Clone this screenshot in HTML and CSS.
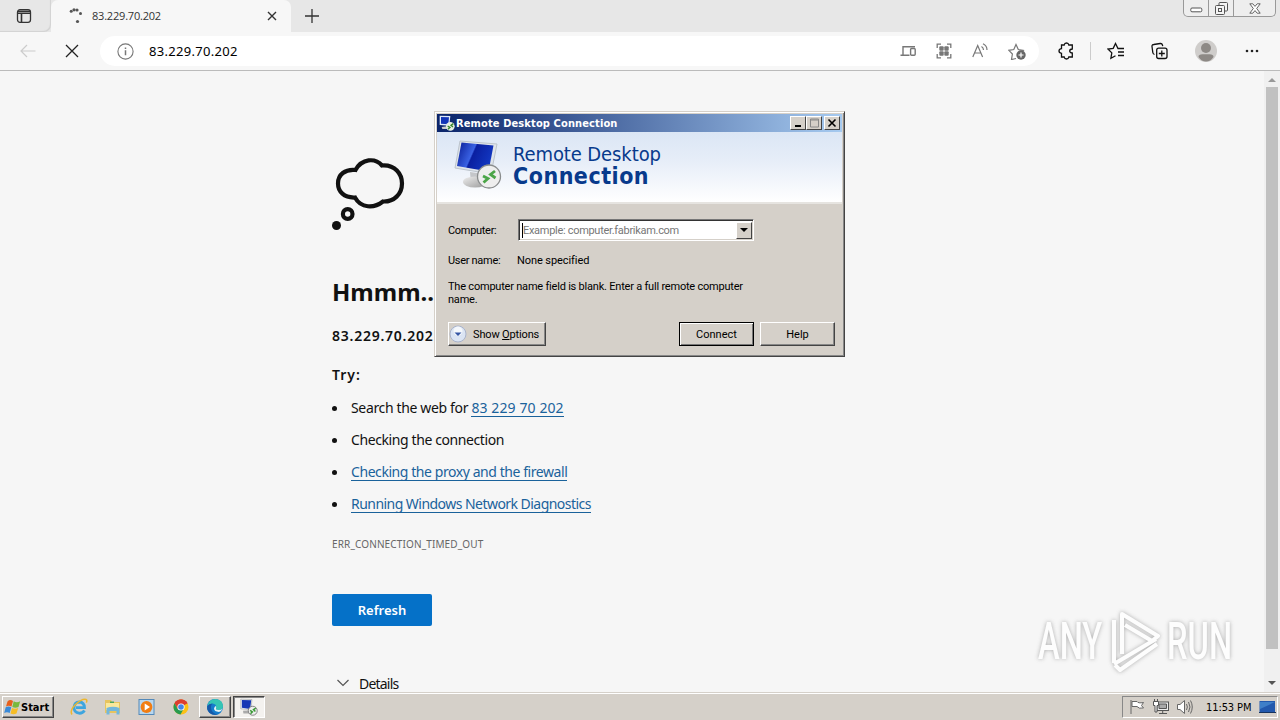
FILE: index.html
```html
<!DOCTYPE html>
<html lang="en">
<head>
    <meta charset="utf-8">
    <title>83.229.70.202</title>
    <link rel="stylesheet" href="styles.css">
</head>
<body>
    <header class="tabs">
        <div class="tab-menu">
            <svg width="16" height="16" viewBox="0 0 16 16" fill="none" stroke="#333" stroke-width="1.3"><rect x="1.5" y="1.7" width="13" height="12.6" rx="2.5"/><path d="M2 3.3h12M2 5.2h12M5.5 5v9" stroke-width="1.6"/></svg>
        </div>
        <div class="tab">
            <svg class="spinner" width="16" height="16" viewBox="0 0 16 16" fill="#555"><circle cx="3.200" cy="3.200" r="1.500"/><circle cx="6" cy="1.800" r="1.600"/><circle cx="9" cy="2" r="1.600"/><circle cx="12.500" cy="5.500" r="1.500"/><circle cx="9.500" cy="13.500" r="1.600"/></svg>
            <span class="tab-title">83.229.70.202</span>
            <svg class="tab-close" width="10" height="10" viewBox="0 0 10 10" stroke="#333" stroke-width="1.4"><path d="M1 1l8 8M9 1L1 9"/></svg>
        </div>
        <svg class="new-tab" width="16" height="16" viewBox="0 0 16 16" stroke="#333" stroke-width="1.3"><path d="M8 1v14M1 8h14"/></svg>
        <div class="win-buttons">
            <span class="wb"><svg width="13" height="6" viewBox="0 0 13 6" fill="#fff" stroke="#555"><rect x=".8" y="1" width="11" height="3.8" rx="1.2"/></svg></span>
            <span class="wb"><svg width="13" height="13" viewBox="0 0 13 13" fill="#f4f4f4" stroke="#555"><rect x="4" y=".5" width="8.5" height="8.5" rx="1"/><rect x=".5" y="3.5" width="9" height="9" rx="1"/><rect x="3.5" y="6.5" width="3" height="3"/></svg></span>
            <span class="wb wide"><svg width="12" height="11" viewBox="0 0 12 11" fill="#fff" stroke="#555" stroke-width=".9"><path d="M.8.8h3L6 3.4 8.2.8h3L7.7 5.5l3.5 4.7h-3L6 7.6l-2.2 2.6h-3l3.5-4.7z"/></svg></span>
        </div>
    </header>

    <nav class="toolbar">
        <svg class="back" width="16" height="14" viewBox="0 0 16 14" fill="none" stroke="#ccc" stroke-width="1.2"><path d="M15.5 7H1M7 1L1 7l6 6"/></svg>
        <svg class="stop" width="14" height="14" viewBox="0 0 14 14" stroke="#222" stroke-width="1.3"><path d="M1 1l12 12M13 1L1 13"/></svg>
        <div class="address">
            <svg width="17" height="17" viewBox="0 0 17 17" fill="none" stroke="#777" stroke-width="1.1"><circle cx="8.5" cy="8.5" r="7.6"/><path d="M8.5 7.3v5M8.5 4.5v1.5" stroke-width="1.5"/></svg>
            <span class="url">83.229.70.202</span>
            <div class="address-icons">
                <svg width="16" height="16" viewBox="0 0 16 16" fill="none" stroke="#777" stroke-width="1.400"><path d="M15 3.700H3v8M.5 12.300h9"/><rect x="10.600" y="5.500" width="4.600" height="6.800" rx="1"/></svg>
                <svg width="16" height="16" viewBox="0 0 16 16" fill="none" stroke="#777" stroke-width="1.300"><path d="M1.200 5V1.200H5M11 1.200h3.800V5M14.800 11v3.800H11M5 14.800H1.200V11"/><g fill="#777" stroke="none"><rect x="3.300" y="3.300" width="4.400" height="4.400" rx="1"/><rect x="8.300" y="3.300" width="4.400" height="4.400" rx="1"/><rect x="3.300" y="8.300" width="4.400" height="4.400" rx="1"/><rect x="8.300" y="8.300" width="4.400" height="4.400" rx="1"/></g></svg>
                <svg width="16" height="16" viewBox="0 0 16 16" fill="none" stroke="#777" stroke-width="1.200"><path d="M.8 14L5.700 2.500 10.600 14M2.500 10h6.400M9.500 3.500q2 1.200 2 3.500M11 .8q4 2 4 6.200"/></svg>
                <svg width="18" height="17" viewBox="0 0 18 17" fill="none" stroke="#777" stroke-width="1.200"><path d="M8 15.500l-4.500 1 .9-5.500L.8 7.300l5-.8L8 1.500l2.300 5 5 .8-1.500 1.500"/><circle cx="13" cy="12" r="4.700" fill="#666" stroke="none"/><path d="M13 9.500v5M10.500 12h5" stroke="#fff"/></svg>
            </div>
        </div>
        <svg class="ext" width="16" height="18" viewBox="0 0 16 18" fill="none" stroke="#111" stroke-width="1.300"><path d="M4 3h2.200Q6.500 1 8.500 1t2.300 2H14.300v4q-2.600.2-2.600 2t2.600 2v4h-3.500q-.3 2-2.300 2t-2.300-2H3.500v-3.700Q1 11 1 9t2.500-2.300V3z"/></svg>
        <span class="divider"></span>
        <svg class="fav" width="18" height="18" viewBox="0 0 18 18" fill="none" stroke="#111" stroke-width="1.300"><path d="M17 6.500h-6L8.500 1.500 6.200 6.300 1 7l3.800 3.900-.9 5.300 4.600-2.500M11 10h6M11 13.500h6"/></svg>
        <svg class="coll" width="17" height="18" viewBox="0 0 17 18" fill="none" stroke="#111" stroke-width="1.300"><rect x="5.700" y="6.200" width="10.300" height="10.300" rx="2"/><path d="M10.800 8.500v6M7.800 11.500h6M3.500 12.500Q2 12 1.800 10.500L1 4.500q-.2-1.800 1.700-2l6.500-1q1.800-.2 2.200 1.300l.3 1.400"/></svg>
        <svg class="avatar" width="22" height="22" viewBox="0 0 22 22"><circle cx="11" cy="11" r="11" fill="#cfcdcb"/><circle cx="11" cy="8" r="5" fill="#8d8985"/><path d="M3.500 17q0-2.800 4-2.800h7q4 0 4 2.800Q15.500 21.500 11 21.500T3.500 17" fill="#8d8985"/></svg>
        <svg class="more" width="14" height="4" viewBox="0 0 14 4" fill="#222"><circle cx="2" cy="2" r="1.300"/><circle cx="7" cy="2" r="1.300"/><circle cx="12" cy="2" r="1.300"/></svg>
    </nav>

    <div class="viewport">
        <main class="error">
            <svg class="cloud" width="74" height="76" viewBox="332 156 74 76" fill="none" stroke="#111" stroke-width="4.200"><path d="M355.500 170C362 158.500 375 157.500 382 165.500C395 164.500 402 174 402 183.500C402 194 394 202 383 201.500C374 208.500 361 208.500 355 197.500C344 198 338 191.500 338 183.500C338 174.500 345 169 355.500 170z"/><circle cx="347.700" cy="214" r="4.800"/><circle cx="336.500" cy="225.500" r="4.500" fill="#111" stroke="none"/></svg>
            <h1>Hmmm...</h1>
            <p class="host">83.229.70.202</p>
            <p class="try">Try:</p>
            <ul>
                <li><span class="search">Search the web for <a href="#">83 229 70 202</a></span></li>
                <li><span class="check">Checking the connection</span></li>
                <li><a class="proxy" href="#">Checking the proxy and the firewall</a></li>
                <li><a class="diag" href="#">Running Windows Network Diagnostics</a></li>
            </ul>
            <p class="code">ERR_CONNECTION_TIMED_OUT</p>
            <button class="refresh">Refresh</button>
            <div class="details"><svg width="12" height="8" viewBox="0 0 12 8" fill="none" stroke="#555" stroke-width="1.200"><path d="M.5 1L6 6.500 11.500 1"/></svg><span>Details</span></div>
        </main>
        <div class="scrollbar">
            <span class="up"></span>
            <span class="thumb"></span>
            <span class="down"></span>
        </div>
    </div>

    <footer class="taskbar">
        <div class="start">
            <svg width="17" height="16" viewBox="0 0 17 16"><path d="M3.500 2.500Q6 0 9 2L7.500 7.500q-3-1.500-5.500 0z" fill="#e8601c"/><path d="M9.700 2.300q3 1.800 6.500 0L14.500 8q-3 1.500-6.200 0z" fill="#79b93c"/><path d="M1.700 8.300q3-1.500 5.600 0L5.700 14Q3 12.500 .2 14z" fill="#3a8ad8"/><path d="M8 9q3 1.500 6.200 0l-1.700 5.500q-3 1.500-6 0z" fill="#f6bd25"/></svg>
            <b>Start</b>
        </div>
        <div class="launch">
            <svg width="18" height="18" viewBox="0 0 18 18" fill="none"><path d="M14.500 12.500Q12.500 15.500 9 15.200 4 14.500 4 9.500 4.500 4 9.300 4q5 .3 5.200 5.700H6" stroke="#3da5df" stroke-width="2.800"/><path d="M2 16.500Q-.5 13 5 7 12 .5 16 1.500q1.500.8.300 3.200" stroke="#edb72e" stroke-width="1.500"/></svg>
            <svg width="18" height="18" viewBox="0 0 18 18"><path d="M1 2h6l1 2h8v11H1z" fill="#e7c45e"/><path d="M2 5h13v7H2z" fill="#fae89b"/><path d="M6 3.500h4V5H6z" fill="#4da75c"/><path d="M2.500 10q6.500-2.500 13 0v6.500h-3V13h-7v3.500h-3z" fill="#72b7dc"/></svg>
            <svg width="18" height="18" viewBox="0 0 18 18"><rect x="1" y="1.500" width="15" height="15" fill="#b8d7ef" stroke="#5489b9"/><circle cx="8.500" cy="9" r="5.900" fill="#f17d13"/><path d="M6.700 5.500v7L12 9z" fill="#fff"/></svg>
            <svg width="18" height="18" viewBox="0 0 18 18"><circle cx="9" cy="9" r="7.500" fill="#fbc116"/><path d="M9 9L2.500 5.200A7.500 7.500 0 0 1 15.500 5.200z" fill="#dc3e30"/><path d="M9 9V5.200h6.500A7.500 7.500 0 0 0 2.500 5.200L5.700 11z" fill="#dc3e30"/><path d="M2.500 5.200A7.500 7.500 0 0 0 8.500 16.500l3.200-5.700-6 .2z" fill="#279b50"/><circle cx="9" cy="9" r="3.600" fill="#fff"/><circle cx="9" cy="9" r="2.800" fill="#4285e8"/></svg>
        </div>
        <div class="task">
            <svg width="18" height="18" viewBox="0 0 18 18"><circle cx="9" cy="9" r="8" fill="#157ccc"/><path d="M1.300 8Q3 1 9.500 1q7 .5 7.500 7 0 4-4.500 4-3.500 0-2.300-2.500Q10.500 6 6.500 5.500 3 5.500 1.300 8" fill="#35c5b4"/><path d="M1.300 8Q3 5.500 6.500 5.500 4 8 5.500 12t6.500 4.400Q5 18 2 13 .7 10.500 1.300 8" fill="#1659a8"/><path d="M10.200 9.500q-1.200 2.500 2.300 2.500 2.500 0 4.200-1.500-1 2.500-3.700 3.500Q8 13.500 8 10.500 8.500 8 10 8z" fill="#e2f3f5"/></svg>
        </div>
        <div class="task pressed">
            <svg width="18" height="18" viewBox="0 0 48 48"><path d="M2 3l30 1-3 27-27-2z" fill="#e7edf4" stroke="#777"/><path d="M5 5l25 1-3 23-22-3z" fill="#1637b5"/><path d="M8 34l14-1 3 8H9z" fill="#aaa"/><circle cx="34" cy="34" r="12" fill="#eee" stroke="#666" stroke-width="2"/><path d="M27 33l6 4-5 5M42 27l-6 4 5 5" fill="none" stroke="#3b9a36" stroke-width="4"/></svg>
        </div>
        <div class="tray">
            <svg width="18" height="18" viewBox="0 0 18 18" fill="#fff" stroke="#666"><path d="M3 2v14M4 3.500h5q1 2 6.500 1l-2 3 2 2.500q-5 1-6.500-1.500H4z"/></svg>
            <svg width="18" height="18" viewBox="0 0 18 18" fill="#eee" stroke="#555"><rect x="5" y="4" width="11.500" height="8.500"/><path d="M7 6h7.500v4.500H7z" fill="#aaa"/><path d="M10.700 13v2.500M7 15.500h8"/><path d="M1.500 3.500h5v4H5V14H3V7.500H1.500zM2.500 3.500V1M5.500 3.500V1" fill="#fff"/></svg>
            <svg width="18" height="18" viewBox="0 0 18 18" fill="#fff" stroke="#666"><path d="M1.500 6.500H4L8.500 2.500v13L4 11.500H1.500z"/><path d="M10.500 6q1.700 3 0 6M12.500 4q3 5 0 10M14.500 2.500q3.500 6.500 0 13" fill="none"/></svg>
            <span class="clock">11:53 PM</span>
            <svg width="17" height="14" viewBox="0 0 17 14"><rect x=".5" y="1" width="15.500" height="12" fill="#2359ad"/><path d="M1 2h15L1 9z" fill="#3f7fc8"/><path d="M0 12h17v1H0z" fill="#17345f"/></svg>
        </div>
    </footer>

    <section class="dialog">
        <div class="titlebar">
            <svg width="16" height="16" viewBox="0 0 48 48"><path d="M2 2l32 1-3 29-29-2z" fill="#dde9fa"/><path d="M6 6l24 1-2 21-22-2z" fill="#1235b7"/><path d="M8 36l16-2 6 8H10z" fill="#ccc"/><circle cx="34" cy="34" r="13" fill="#e8f0e4"/><path d="M26 33l7 4-6 6M43 26l-7 5 6 5" fill="none" stroke="#39872d" stroke-width="4"/></svg>
            <b>Remote Desktop Connection</b>
            <div class="caps">
                <span><svg width="11" height="10" viewBox="0 0 11 10" fill="#000"><path d="M2 7h6v2H2z"/></svg></span>
                <span><svg width="11" height="10" viewBox="0 0 11 10" fill="none" stroke="#888"><path d="M1.500 1h8v8h-8z"/><path d="M1 2h9"/></svg></span>
                <span class="last"><svg width="10" height="10" viewBox="0 0 10 10" stroke="#000" stroke-width="1.600"><path d="M1.500 1.500l7 7M8.500 1.500l-7 7"/></svg></span>
            </div>
        </div>
        <div class="banner">
            <svg width="50" height="50" viewBox="0 0 50 50">
                <defs>
                    <linearGradient id="screen" x2="1" y2=".35"><stop offset="0" stop-color="#071a92"/><stop offset=".48" stop-color="#3a62e4"/><stop offset=".52" stop-color="#0a1fa0"/><stop offset="1" stop-color="#1236c0"/></linearGradient>
                    <linearGradient id="metal" x2="1" y2="1"><stop offset="0" stop-color="#eee"/><stop offset="1" stop-color="#999"/></linearGradient>
                </defs>
                <path d="M16 32l14 2 2 9H17z" fill="#c4c6c9"/>
                <ellipse cx="21" cy="42" rx="12" ry="5.500" fill="url(#metal)"/>
                <path d="M6 1l37 3-6 30L1 28z" fill="#dfe4ea" stroke="#bcc4cc"/>
                <path d="M7.500 2.500l32 3-5 26L3 26z" fill="url(#screen)"/>
                <circle cx="35" cy="36.500" r="11.500" fill="#eee" stroke="#898c8d" stroke-width="1.300"/>
                <path d="M29 36l5 2.500-4.500 4M41 31l-4.500 3.500 5 3.500" fill="none" stroke="#4ba548" stroke-width="2.800"/>
            </svg>
            <div class="brand"><span>Remote Desktop</span><b>Connection</b></div>
        </div>
        <div class="form">
            <div class="field">
                <label>Computer:</label>
                <div class="combo"><span class="placeholder">Example: computer.fabrikam.com</span><span class="drop"></span></div>
            </div>
            <div class="field user"><label>User name:</label><span>None specified</span></div>
            <p class="hint">The computer name field is blank. Enter a full remote computer<br>name.</p>
            <div class="actions">
                <div class="btn options">
                    <svg width="18" height="18" viewBox="0 0 18 18"><circle cx="9" cy="9" r="8" fill="#dbe4f3" stroke="#a9b3cb"/><circle cx="9" cy="6" r="4.500" fill="#f5f8fc"/><path d="M5.500 7.500h7L9 11z" fill="#3656a5"/></svg>
                    <span>Show <u>O</u>ptions</span>
                </div>
                <div class="btn connect">Connect</div>
                <div class="btn help">Help</div>
            </div>
        </div>
    </section>

    <div class="watermark">
        <span class="any">ANY</span>
        <svg width="58" height="66" viewBox="0 0 58 66" fill="none" stroke="#fff" stroke-width="4" stroke-linejoin="round"><path d="M19 46V6L55 28 49 33 22 17M11 12v43M11 56L53 31M12 57l5 5 37-26"/></svg>
        <span class="run">RUN</span>
    </div>
</body>
</html>
```
FILE: styles.css
```css
*{
    box-sizing: border-box;
}
body{
    margin: 0;
    width: 1280px;
    height: 720px;
    overflow: hidden;
    display: flex;
    flex-direction: column;
    position: relative;
    background: #f6f6f6;
    font-family: "Noto Sans", sans-serif;
    color: #111;
}
svg{
    display: block;
    flex: none;
}
p, h1, ul{
    margin: 0;
    padding: 0;
}

/* tab strip */
.tabs{
    height: 32px;
    background: #e7e7e7;
    display: flex;
    align-items: flex-start;
    flex: none;
}
.tab-menu{
    width: 51px;
    height: 32px;
    padding: 8px 0 0 16px;
    border-bottom-right-radius: 7px;
    box-shadow: inset -1px -1px 1px #d2d2d2;
}
.tab{
    width: 240px;
    height: 32px;
    background: #f7f7f7;
    display: flex;
    align-items: center;
    padding: 0 14px 0 17px;
    border-radius: 7px 7px 0 0;
}
.tab-title{
    font-family: "Open Sans", sans-serif;
    font-size: 11px;
    letter-spacing: -.2px;
    margin: -2px 0 0 8px;
    flex: 1;
    color: #333;
}
.new-tab{
    margin: 8px 0 0 13px;
}
.win-buttons{
    margin-left: auto;
    margin-right: 4px;
    width: 93px;
    height: 17px;
    border: 1px solid #999;
    border-top: 0;
    border-radius: 0 0 5px 5px;
    display: flex;
    background: #eee;
}
.wb{
    width: 25px;
    display: flex;
    align-items: center;
    justify-content: center;
    border-right: 1px solid #999;
}
.wb:first-child{
    padding-top: 4px;
}
.wb.wide{
    flex: 1;
    border: 0;
}

/* toolbar */
.toolbar{
    height: 39px;
    flex: none;
    display: flex;
    align-items: center;
    background: #f7f7f7;
    border-bottom: 1px solid #bbb;
    padding: 0 21px 0 20px;
}
.stop{
    margin-left: 29px;
}
.address{
    width: 940px;
    height: 30px;
    margin-left: 21px;
    border-radius: 15px;
    background: #fff;
    display: flex;
    align-items: center;
    padding: 0 13px 0 17px;
}
.url{
    font-size: 13px;
    letter-spacing: .3px;
    margin-left: 15px;
    flex: 1;
    color: #000;
}
.address-icons{
    display: flex;
    align-items: center;
    gap: 20px;
}
.ext{
    margin-left: 19px;
}
.divider{
    width: 1px;
    height: 18px;
    background: #ccc;
    margin-left: 16px;
}
.fav{
    margin-left: 16px;
}
.coll{
    margin-left: 26px;
}
.avatar{
    margin-left: 27px;
}
.more{
    margin-left: 28px;
}

/* page */
.viewport{
    flex: 1;
    min-height: 0;
    overflow: hidden;
    display: flex;
}
.error{
    width: 1264px;
    padding: 85px 0 0 332px;
    font-size: 14px;
}
h1{
    font-size: 24px;
    line-height: 32px;
    margin-top: 44px;
}
.host, .try{
    font-weight: 600;
    line-height: 20px;
    margin-top: 18px;
}
.host{
    letter-spacing: .75px;
}
.try{
    margin-top: 19px;
    letter-spacing: 1px;
}
ul{
    list-style: none;
    margin-top: 7px;
}
li{
    height: 32px;
    line-height: 32px;
    display: flex;
    align-items: center;
}
li::before{
    content: "";
    width: 5px;
    height: 5px;
    border-radius: 50%;
    background: #111;
    margin: 0 14px 0 0;
}
a{
    color: #1a629b;
    text-decoration: none;
    border-bottom: 1px solid #1a629b;
    line-height: 17px;
    display: inline-block;
}
.search{
    letter-spacing: -.35px;
}
.search a{
    letter-spacing: .1px;
}
.check{
    letter-spacing: -.4px;
}
.proxy{
    letter-spacing: -.43px;
}
.diag{
    letter-spacing: -.54px;
}
.code{
    font-size: 10px;
    line-height: 14px;
    letter-spacing: .13px;
    color: #666;
    margin-top: 17px;
}
.refresh{
    display: block;
    width: 100px;
    height: 32px;
    margin-top: 43px;
    border: 0;
    border-radius: 2px;
    background: #0571c8;
    color: #fff;
    font: 600 13px "Noto Sans", sans-serif;
}
.details{
    display: flex;
    align-items: center;
    height: 20px;
    margin-top: 47px;
    padding-left: 5px;
}
.details span{
    margin-left: 10px;
    letter-spacing: -.8px;
}
.scrollbar{
    width: 16px;
    background: #f0f0f0;
    display: flex;
    flex-direction: column;
    align-items: center;
}
.up, .down{
    border: 4px solid transparent;
}
.up{
    border-bottom-color: #999;
    border-top: 0;
    margin-top: 7px;
}
.thumb{
    width: 12px;
    height: 562px;
    margin-top: 5px;
    background: #c1c1c1;
}
.down{
    border-top-color: #555;
    border-bottom: 0;
    margin-top: 32px;
}

/* taskbar */
.taskbar{
    height: 28px;
    flex: none;
    display: flex;
    align-items: center;
    background: #d5d0c9;
    border-top: 1px solid #d5d0c9;
    box-shadow: inset 0 1px #fff;
    padding: 1px 2px 0;
}
.start, .task{
    border: 1px solid;
    border-color: #fff #444 #444 #fff;
    box-shadow: inset -1px -1px #888;
    height: 22px;
    display: flex;
    align-items: center;
}
.start{
    width: 52px;
    padding-left: 1px;
    font: 11px "DejaVu Sans Condensed", "DejaVu Sans", sans-serif;
    color: #000;
}
.launch{
    display: flex;
    gap: 16px;
    margin: 0 9px 0 16px;
}
.task{
    width: 32px;
    justify-content: center;
}
.pressed{
    margin-left: 2px;
    border-color: #444 #fff #fff #444;
    box-shadow: inset 1px 1px #888;
    background: #f4f2ef;
}
.tray{
    margin-left: auto;
    height: 22px;
    width: 156px;
    border: 1px solid;
    border-color: #888 #fff #fff #888;
    display: flex;
    align-items: center;
    gap: 6px;
    padding-left: 5px;
}
.clock{
    font: 11px "DejaVu Sans Condensed", "DejaVu Sans", sans-serif;
    letter-spacing: -.1px;
    white-space: nowrap;
    margin-left: 6px;
    margin-right: 2px;
    color: #000;
}

/* remote desktop window */
.dialog{
    position: absolute;
    left: 434px;
    top: 111px;
    width: 411px;
    height: 246px;
    background: #d5d0c9;
    border: 1px solid;
    border-color: #d5d0c9 #444 #444 #d5d0c9;
    box-shadow: inset 1px 1px #fff, inset -1px -1px #888;
    padding: 2px;
    font: 11px "Roboto", sans-serif;
    color: #000;
}
.titlebar{
    height: 18px;
    background: linear-gradient(90deg, #0a246a, #a6caf0);
    color: #fff;
    display: flex;
    align-items: center;
    padding: 0 2px;
    font: 11px "DejaVu Sans Condensed", "DejaVu Sans", sans-serif;
}
.titlebar b{
    margin-left: 1px;
    flex: 1;
    letter-spacing: .12px;
}
.caps{
    display: flex;
}
.caps span{
    width: 16px;
    height: 14px;
    background: #d5d0c9;
    border: 1px solid;
    border-color: #fff #444 #444 #fff;
    display: flex;
    align-items: center;
    justify-content: center;
}
.caps .last{
    margin-left: 2px;
}
.banner{
    height: 70px;
    background: linear-gradient(#dbe6f5, #e6edf8 40%, #fff);
    display: flex;
    padding: 8px 0 0 17px;
}
.brand{
    color: #083a8c;
    font-family: "DejaVu Sans Condensed", "DejaVu Sans", sans-serif;
    font-size: 20px;
    line-height: 22px;
    margin: 3px 0 0 9px;
}
.brand span, .brand b{
    display: block;
    white-space: nowrap;
}
.brand span{
    letter-spacing: -.1px;
}
.brand b{
    font-size: 23px;
    letter-spacing: .5px;
}
.form{
    border-top: 2px solid #e6e4e0;
    padding: 15px 7px 0 11px;
}
.field{
    display: flex;
    align-items: center;
    height: 22px;
}
.field label{
    width: 69px;
    letter-spacing: -.3px;
}
.field label + .combo{
    margin-left: 1px;
}
.combo{
    width: 236px;
    height: 22px;
    background: #fff;
    border: 1px solid;
    border-color: #777 #fff #fff #777;
    box-shadow: inset 1px 1px #333, inset -1px -1px #d5d0c9;
    display: flex;
    align-items: center;
    padding: 2px 1px 2px 3px;
}
.placeholder{
    color: #777;
    border-left: 1px solid #000;
    flex: 1;
    line-height: 15px;
    letter-spacing: -.3px;
    white-space: nowrap;
}
.drop{
    width: 16px;
    height: 17px;
    background: #d5d0c9;
    border: 1px solid;
    border-color: #fff #444 #444 #fff;
    display: flex;
    align-items: center;
    justify-content: center;
}
.drop::before{
    content: "";
    border: 4px solid transparent;
    border-top-color: #000;
    border-bottom: 0;
}
.user{
    margin-top: 8px;
}
.user span{
    letter-spacing: -.08px;
}
.hint{
    margin-top: 9px;
    line-height: 13px;
    letter-spacing: -.21px;
    white-space: nowrap;
}
.actions{
    display: flex;
    margin-top: 16px;
}
.btn{
    width: 75px;
    height: 24px;
    border: 1px solid;
    border-color: #fff #444 #444 #fff;
    box-shadow: inset -1px -1px #888;
    display: flex;
    align-items: center;
    justify-content: center;
}
.options{
    width: 98px;
    justify-content: flex-start;
}
.options span{
    margin-left: 6px;
    letter-spacing: -.15px;
}
.connect{
    margin-left: 133px;
    border-color: #000;
    box-shadow: inset 1px 1px #fff, inset -1px -1px #777;
}
.help{
    margin-left: 6px;
}

/* overlay logo */
.watermark{
    position: absolute;
    left: 1038px;
    top: 608px;
    width: 200px;
    height: 66px;
    display: flex;
    align-items: center;
    color: #fff;
    filter: drop-shadow(0 0 2px #999);
    opacity: .8;
}
.watermark span{
    font: 500 51px "Roboto", sans-serif;
    width: 66px;
    transform: scaleX(.64);
    transform-origin: 0 50%;
}
.watermark svg{
    margin-left: -1px;
}
.watermark .run{
    margin-left: 6px;
}
```
